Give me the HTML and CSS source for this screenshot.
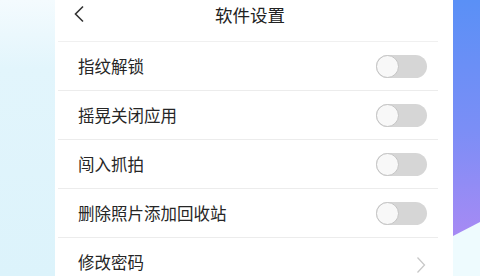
FILE: index.html
```html
<!DOCTYPE html>
<html>
<head>
<meta charset="utf-8">
<link rel="stylesheet" href="styles.css">
</head>
<body>
<div class="page">
  <div class="side-left"></div>
  <div class="panel">
    <div class="header">
      <svg class="back" width="12" height="18" viewBox="0 0 12 18"><path d="M10 1.5 L2.5 9 L10 16.5" fill="none" stroke="#333" stroke-width="1.6"/></svg>
      <div class="title">软件设置</div>
    </div>
    <div class="list">
      <div class="row"><span class="label">指纹解锁</span><span class="toggle"><span class="knob"></span></span></div>
      <div class="row"><span class="label">摇晃关闭应用</span><span class="toggle"><span class="knob"></span></span></div>
      <div class="row"><span class="label">闯入抓拍</span><span class="toggle"><span class="knob"></span></span></div>
      <div class="row"><span class="label">删除照片添加回收站</span><span class="toggle"><span class="knob"></span></span></div>
      <div class="row last"><span class="label">修改密码</span><svg class="chev" width="10" height="18" viewBox="0 0 10 18"><path d="M1.5 1.5 L8.5 9 L1.5 16.5" fill="none" stroke="#c8c8c8" stroke-width="1.3"/></svg></div>
    </div>
  </div>
  <div class="side-right"><div class="blue"></div></div>
</div>
</body>
</html>
```
FILE: styles.css
```css
html, body { margin: 0; padding: 0; }
body {
  width: 480px; height: 276px; overflow: hidden;
  font-family: "Noto Sans CJK SC", "Noto Sans", sans-serif;
}
.page { display: flex; height: 276px; }
.side-left {
  width: 55px;
  background: linear-gradient(180deg, #f4fbfe 0%, #e2f5fc 25%, #dcf3fb 100%);
}
.panel { width: 398px; background: #ffffff; }
.side-right {
  width: 27px;
  background: #eefbfe;
}
.blue {
  height: 236px;
  background: linear-gradient(180deg, #5a90f6 0%, #7b8ef6 55%, #a78af4 100%);
  clip-path: polygon(0 0, 100% 0, 100% 222px, 0 236px);
}
.header {
  height: 41px;
  border-bottom: 1px solid #f0f0f0;
  margin: 0 15px 0 3px;
  position: relative;
  display: flex; align-items: center; justify-content: center;
}
.back { position: absolute; left: 15px; top: 5px; }
.title { font-size: 17.5px; color: #222; margin-top: -13px; padding-left: 4px; }
.list { margin: 0 15px 0 3px; }
.row {
  height: 48px;
  border-bottom: 1px solid #ececec;
  display: flex; align-items: center; justify-content: space-between;
  padding: 0 11px 0 20px;
}
.row.last { border-bottom: none; padding-right: 11px; }
.label { font-size: 16.5px; color: #262626; }
.toggle {
  width: 51px; height: 23px; border-radius: 12px;
  background: #d6d6d6; position: relative;
}
.knob {
  position: absolute; left: 0; top: 0;
  width: 21px; height: 21px; border-radius: 50%;
  background: #f8f8f8; border: 1px solid #c4c4c4;
}
.chev { margin-right: 1px; margin-top: 6px; }
```
